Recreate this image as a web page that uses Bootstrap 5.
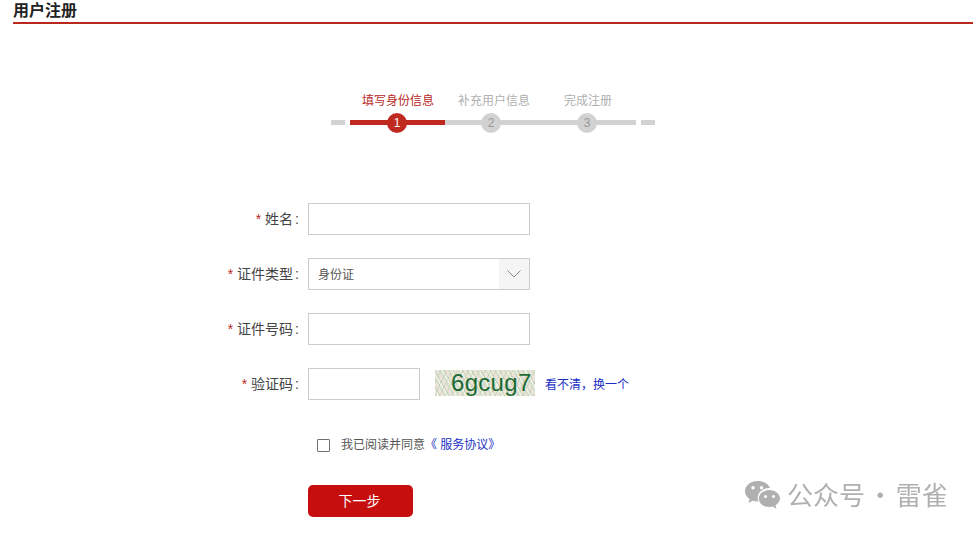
<!DOCTYPE html>
<html lang="zh">
<head>
<meta charset="utf-8">
<title>用户注册</title>
<link href="https://cdn.jsdelivr.net/npm/bootstrap@5.3.0/dist/css/bootstrap.min.css" rel="stylesheet">
<style>
html,body{height:533px;overflow:hidden}
body{font-family:"Liberation Sans","Noto Sans CJK SC",sans-serif;background:#fff;color:#333;font-size:14px;position:relative}
.reg-head{margin-left:13px;margin-right:5px;border-bottom:2px solid #b8281f;height:24px;font-size:16px;line-height:21px;font-weight:700;color:#222}
.steps-box{width:324px;margin-left:331px;margin-top:67px}
.step-labels{height:20px;font-size:12px;line-height:20px;color:#b0b0b0;position:relative}
.step-labels span{position:absolute;top:0;white-space:nowrap}
.step-labels .on{color:#b8281f}
.step-track{height:5px;margin-top:9px;position:relative;gap:5px}
.seg{height:5px;background:#d2d2d2}
.seg-on{background:#c0291f}
.dot{position:absolute;top:-7px;width:20px;height:20px;border-radius:50%;background:#d2d2d2;color:#999;font-size:12px;line-height:20px;text-align:center}
.dot-on{background:#c0291f;color:#fff}
.reg-form{margin-top:78px}
.form-line{height:32px;margin-bottom:23px}
.lab{width:300px;padding-right:1px;text-align:right;font-size:14px;line-height:32px;color:#444;flex:none}
.lab i{font-style:normal;color:#b8281f;margin-right:4px}
.lab b{font-weight:400;margin-left:2px}
.field{margin-left:8px;width:222px;height:32px;border:1px solid #ccc;background:#fff;flex:none;display:block;font-size:12px}
.field-sm{width:112px}
.sel{padding-left:9px;line-height:32px;color:#555}
.sel-btn{width:30px;height:30px;background:#f5f5f5}
.cap{width:100px;height:26px;margin-left:15px;margin-top:2px;flex:none;position:relative;overflow:hidden;
 background:repeating-linear-gradient(115deg,rgba(120,150,110,.18) 0 1px,transparent 1px 5px),repeating-linear-gradient(60deg,#d7e0cc 0 2px,#eef0e2 2px 4px,#c6d4bc 4px 5px,#ece4da 5px 8px);
 color:#1d6a35;font-family:"Liberation Sans",sans-serif;font-size:24px;line-height:26px;padding-left:16px;letter-spacing:.3px}
.cap-link{margin-left:10px;font-size:12px;line-height:34px}
.cap-link a,.agree a{color:#1a2fc4;text-decoration:none}
.agree{margin-left:317px;margin-top:37px;height:16px;font-size:12px;line-height:16px;color:#555}
.agree-box{width:13px;height:13px;border:1px solid #707070;border-radius:1px;margin-right:11px;background:#fff;flex:none}
.go-btn{display:block;margin-left:308px;margin-top:32px;width:105px;height:32px;padding:0;background:#c70e0e;border:0;border-radius:5px;color:#fff;font-size:14px;line-height:32px;text-indent:-2px}
.go-btn:hover{background:#c70e0e;color:#fff}
.wm{position:absolute;left:744px;top:480px;color:#b0b0b0;font-size:26px;line-height:30px;white-space:nowrap;filter:blur(.3px);font-family:"Noto Sans CJK SC",sans-serif;word-spacing:-3.500px}
.wm svg{margin-right:8px;flex:none}
.wm span{margin-left:-2px;margin-top:-2px}
</style>
</head>
<body class="m-0">
<div class="reg-head">用户注册</div>

<div class="steps-box">
  <div class="step-labels">
    <span class="on" style="left:31px">填写身份信息</span>
    <span style="left:127px">补充用户信息</span>
    <span style="left:233px">完成注册</span>
  </div>
  <div class="step-track d-flex">
    <div class="seg" style="width:14px"></div>
    <div class="d-flex" style="width:286px">
      <div class="seg seg-on" style="width:95px"></div>
      <div class="seg" style="width:191px"></div>
    </div>
    <div class="seg" style="width:14px"></div>
    <div class="dot dot-on" style="left:56px">1</div>
    <div class="dot" style="left:150px">2</div>
    <div class="dot" style="left:246px">3</div>
  </div>
</div>

<form class="reg-form" onsubmit="return false">
  <div class="form-line d-flex">
    <label class="lab"><i>*</i>姓名<b>:</b></label>
    <input class="field" type="text" aria-label="姓名">
  </div>
  <div class="form-line d-flex">
    <label class="lab"><i>*</i>证件类型<b>:</b></label>
    <div class="field sel d-flex justify-content-between">
      <span>身份证</span>
      <span class="sel-btn d-flex align-items-center justify-content-center">
        <svg width="14" height="8" viewBox="0 0 14 8" fill="none" stroke="#888" stroke-width="1"><path d="M.5.500 7 7l6.500-6.500"/></svg>
      </span>
    </div>
  </div>
  <div class="form-line d-flex">
    <label class="lab"><i>*</i>证件号码<b>:</b></label>
    <input class="field" type="text" aria-label="证件号码">
  </div>
  <div class="form-line d-flex">
    <label class="lab"><i>*</i>验证码<b>:</b></label>
    <input class="field field-sm" type="text" aria-label="验证码">
    <div class="cap">6gcug7</div>
    <div class="cap-link"><a href="#">看不清&#xFF0C;换一个</a></div>
  </div>
  <div class="agree d-flex align-items-center">
    <span class="agree-box"></span>
    <span>我已阅读并同意<a href="#">《 服务协议》</a></span>
  </div>
  <button class="btn go-btn" type="button">下一步</button>
</form>

<div class="wm d-flex align-items-center">
  <svg width="37" height="30" viewBox="0 0 37 30" fill="#b0b0b0" aria-hidden="true">
    <path d="M13.500 1C6.600 1 1 5.500 1 11.200c0 3.200 1.800 6 4.600 7.900L4.500 23l4.300-2.300c1.400.4 2.900.7 4.500.7h1c-.4-1.100-.6-2.200-.6-3.400 0-5.500 5-9.900 11.500-9.900h.7C24.700 4.100 19.600 1 13.500 1z"/>
    <path d="M36 18.500c0-4.800-4.800-8.600-10.600-8.600s-10.600 3.800-10.600 8.600 4.800 8.600 10.600 8.600c1.200 0 2.400-.2 3.500-.5l3.500 2.400-.9-3.700c2.500-1.600 4.500-4 4.500-6.800z"/>
    <circle cx="9" cy="7.800" r="1.700" fill="#fff"/><circle cx="17.500" cy="7.800" r="1.700" fill="#fff"/>
    <circle cx="21.500" cy="16.500" r="1.500" fill="#fff"/><circle cx="29.500" cy="16.500" r="1.500" fill="#fff"/>
  </svg>
  <span>公众号 · 雷雀</span>
</div>
<script src="https://cdn.jsdelivr.net/npm/bootstrap@5.3.0/dist/js/bootstrap.bundle.min.js"></script>
</body>
</html>
